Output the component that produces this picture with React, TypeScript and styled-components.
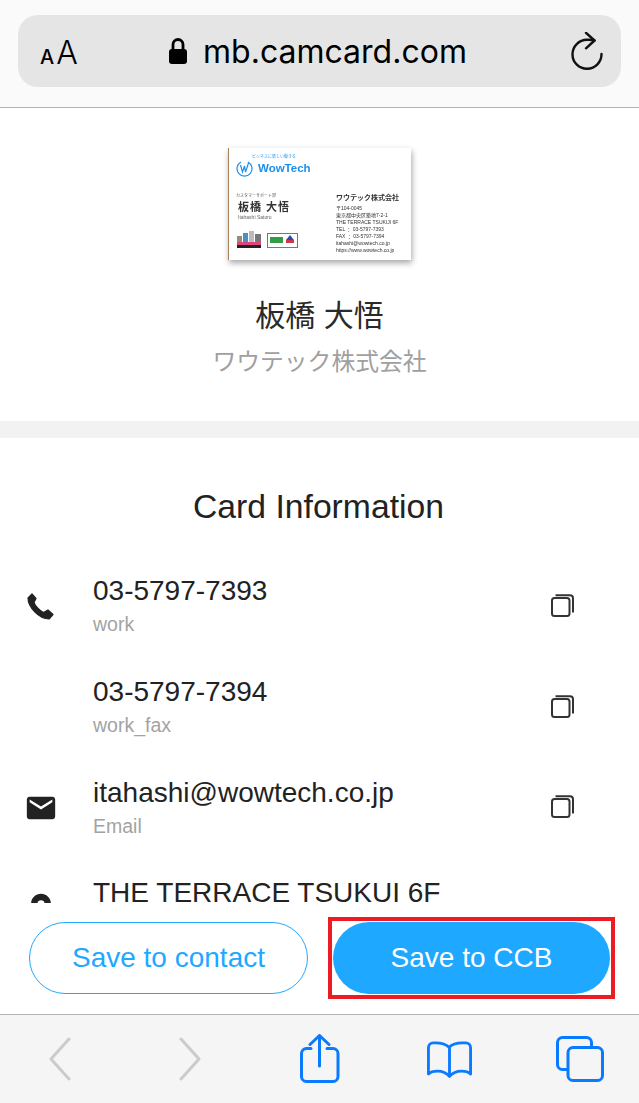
import React from "react";
import styled, { createGlobalStyle } from "styled-components";
import { MdEmail, MdPlace } from "react-icons/md";

const GlobalStyle = createGlobalStyle`
  html, body {
    margin: 0;
    padding: 0;
    background: #fff;
  }
  body {
    font-family: "Liberation Sans", "Noto Sans CJK JP", Arial, sans-serif;
  }
`;

const Page = styled.div`
  width: 639px;
  height: 1103px;
  display: flex;
  flex-direction: column;
  overflow: hidden;
  color: #222;
`;

const AddressBar = styled.header`
  height: 72px;
  flex: none;
  background: #fafafa;
  border-bottom: 1px solid #b2b2b2;
  padding: 15px 18px 20px;
`;

const AddressPill = styled.div`
  height: 72px;
  border-radius: 20px;
  background: #e5e5e5;
  display: flex;
  align-items: center;
  padding: 0 18px 0 22px;
  color: #000;
`;

const TextSize = styled.div`
  width: 40px;
  font-family: Inter, "Liberation Sans", sans-serif;
  font-size: 32px;
  font-weight: 300;
  line-height: 1;
  padding-top: 3px;
  white-space: nowrap;

  small {
    font-size: 20px;
    font-weight: 500;
    margin-right: 2px;
  }
`;

const Url = styled.div`
  flex: 1;
  display: flex;
  justify-content: center;
  align-items: center;
  gap: 16px;
  font-family: Inter, "Liberation Sans", sans-serif;
  font-size: 32px;
  padding-right: 15px;
`;

const Scroll = styled.main`
  flex: 1;
  min-height: 0;
  overflow: hidden;
  background: #fff;
`;

const Hero = styled.section`
  height: 330px;
  display: flex;
  flex-direction: column;
  align-items: center;
  padding-top: 40px;
  box-sizing: border-box;
  border-bottom: 17px solid #f2f2f2;
`;

const Name = styled.h1`
  margin: 36px 0 0;
  font-size: 30px;
  line-height: 40px;
  font-weight: 400;
  color: #2a2a2a;
`;

const Company = styled.p`
  margin: 10px 0 0;
  font-size: 23.8px;
  line-height: 32px;
  color: #a0a0a0;
`;

const BizCard = styled.div`
  width: 183px;
  height: 112px;
  box-sizing: border-box;
  background: #fff;
  border-left: 1px solid #a8805c;
  box-shadow: 1px 3px 6px rgba(0, 0, 0, 0.35);
  padding: 4px 8px 4px 7px;
  display: grid;
  grid-template-columns: 100px 1fr;
  color: #333;
  line-height: 1;
  overflow: hidden;
  filter: blur(0.35px);
`;

const BizLeft = styled.div`
  display: flex;
  flex-direction: column;
  padding-top: 3px;
`;

const BizRight = styled.div`
  padding-top: 42px;
  font-size: 5px;
  line-height: 7px;
  white-space: nowrap;
`;

const Tagline = styled.div`
  font-size: 4px;
  color: #2a9df4;
  margin-left: 16px;
  height: 5px;
`;

const BizLogo = styled.div`
  display: flex;
  align-items: center;
  gap: 5px;
  font-size: 11.5px;
  font-weight: 700;
  color: #1e8fe8;
`;

const Dept = styled.div`
  font-size: 4px;
  margin-top: 17px;
  color: #555;
`;

const BizName = styled.div`
  font-size: 11px;
  font-weight: 700;
  letter-spacing: 1px;
  margin: 4px 0 0 2px;
`;

const Romaji = styled.div`
  font-size: 5px;
  color: #666;
  margin: 2px 0 0 2px;
`;

const Badges = styled.div`
  display: flex;
  gap: 5px;
  margin-top: 10px;
  align-items: flex-end;
`;

const BizCompany = styled.div`
  font-size: 7px;
  font-weight: 700;
  line-height: 8px;
  margin-bottom: 3px;
`;

const InfoTitle = styled.h2`
  margin: 0;
  padding-top: 48px;
  font-size: 33.7px;
  line-height: 40px;
  font-weight: 400;
  text-align: center;
  color: #222;
  padding-right: 2px;
`;

const InfoList = styled.div`
  margin-top: 29px;
`;

const Row = styled.div`
  height: 100.7px;
  display: grid;
  grid-template-columns: 93px 1fr 88px;
  align-items: center;
`;

const RowIcon = styled.div`
  display: flex;
  justify-content: center;
  padding-right: 12px;
  color: #222;
  padding-top: 2px;
`;

const RowValue = styled.div`
  font-size: 28px;
  line-height: 36px;
  color: #222;
  white-space: nowrap;
`;

const RowLabel = styled.div`
  font-size: 19.5px;
  line-height: 26px;
  margin-top: 2px;
  color: #a3a3a3;
`;

const CopyButton = styled.div`
  display: flex;
`;

const ActionBar = styled.div`
  flex: none;
  height: 111px;
  box-sizing: border-box;
  background: #fff;
  padding: 14px 24px 15px 29px;
  display: flex;
  align-items: center;
  gap: 20px;
`;

const ActionButton = styled.button<{ $primary?: boolean }>`
  height: 72px;
  border-radius: 36px;
  box-sizing: border-box;
  font-family: inherit;
  font-size: 28px;
  padding: 0;
  margin: 0;
  color: ${(p) => (p.$primary ? "#fff" : "#1fa8ff")};
  background: ${(p) => (p.$primary ? "#1fa8ff" : "#fff")};
  border: ${(p) => (p.$primary ? "none" : "1px solid #1fa8ff")};
  width: ${(p) => (p.$primary ? "277px" : "279px")};
`;

const Highlight = styled.div`
  padding: 1px;
  border: 4px solid #ed1c24;
  display: flex;
`;

const ToolBar = styled.footer`
  flex: none;
  height: 89px;
  box-sizing: border-box;
  border-top: 1px solid #b2b2b2;
  background: #f5f5f5;
  display: grid;
  grid-template-columns: repeat(5, 130px);
  justify-content: center;
  align-items: center;
`;

const ToolSlot = styled.div`
  display: flex;
  justify-content: center;
`;

const Lock = () => (
  <svg width="18" height="26" viewBox="0 0 18 26">
    <path d="M4 13V6.500a5 5 0 0 1 10 0V13" fill="none" stroke="#000" strokeWidth="2.800" />
    <rect x="0" y="11" width="18" height="15" rx="3" fill="#000" />
  </svg>
);

const Reload = () => (
  <svg width="32" height="38" viewBox="0 0 32 38" fill="none" stroke="#111" strokeWidth="2.400" strokeLinecap="round" strokeLinejoin="round">
    <path d="M30.500 22A14.500 14.500 0 1 1 16 7.800c2.500 0 5-.2 7.500.7" />
    <path d="M15 .8 23.500 8.500 15 16.300" />
  </svg>
);

const PhoneIcon = () => (
  <svg width="27" height="27" viewBox="0 0 27 27" fill="#222" stroke="#222" strokeWidth="1.200" strokeLinejoin="round">
    <path d="M5 1 9 5.500 7 9.500C8 13 13 18 16.500 19.500L21 17 26 21.500 22 26C12 26 1 14 1 5Z" />
  </svg>
);

const CopyIcon = () => (
  <svg width="23" height="23" viewBox="0 0 23 23" fill="none" stroke="#333" strokeWidth="2">
    <rect x="1" y="4" width="17.500" height="18" rx="2.500" />
    <path d="M4.500 1.200h14.500a3 3 0 0 1 3 3V18.500" />
  </svg>
);

const BackIcon = () => (
  <svg width="22" height="44" viewBox="0 0 22 44" fill="none" stroke="#cbcbcb" strokeWidth="3" strokeLinecap="round" strokeLinejoin="round">
    <path d="M20 2 2 22l18 20" />
  </svg>
);

const ForwardIcon = () => (
  <svg width="22" height="44" viewBox="0 0 22 44" fill="none" stroke="#cbcbcb" strokeWidth="3" strokeLinecap="round" strokeLinejoin="round">
    <path d="M2 2l18 20L2 42" />
  </svg>
);

const ShareIcon = () => (
  <svg width="40" height="50" viewBox="0 0 40 50" fill="none" stroke="#0a7aff" strokeWidth="3" strokeLinecap="round" strokeLinejoin="round">
    <path d="M11 14.500H6.500a5 5 0 0 0-5 5v23a5 5 0 0 0 5 5h26.500a5 5 0 0 0 5-5v-23a5 5 0 0 0-5-5H27" />
    <path d="M19.500 32V1.500M10 10.500l9.500-9 9.500 9" />
  </svg>
);

const BookIcon = () => (
  <svg width="45" height="38.300" viewBox="0 -1.500 47 40" fill="none" stroke="#0a7aff" strokeWidth="3" strokeLinecap="round" strokeLinejoin="round">
    <path d="M23 6C20 3 15 1.500 9 1.500H6.500a5 5 0 0 0-5 5V34c2-2 5-3 9.500-3 5 0 9.500 2 12.500 5.500 3-3.500 7.500-5.500 12.500-5.500 4.500 0 7.500 1 9.500 3V6.500a5 5 0 0 0-5-5H37C31 1.500 26 3 23 6z" />
    <path d="M23.500 6v30" />
  </svg>
);

const TabsIcon = () => (
  <svg width="48" height="46" viewBox="0 0 48 46" fill="none" stroke="#0a7aff" strokeWidth="3" strokeLinejoin="round">
    <path d="M11.500 33.500H6.500a5 5 0 0 1-5-5V6.500a5 5 0 0 1 5-5h24a5 5 0 0 1 5 5v5" />
    <rect x="12" y="11.500" width="34.500" height="33" rx="5" />
  </svg>
);

const WowMark = () => (
  <svg width="17" height="17" viewBox="0 0 17 17" fill="none" stroke="#1e8fe8" strokeWidth="1.200">
    <path d="M5 2a7.500 7.500 0 1 0 7 0" />
    <path d="M4.500 5l2 7 2-6 1 6 3-9" />
  </svg>
);

const BadgeCity = () => (
  <svg width="26" height="18" viewBox="0 0 26 18">
    <rect x="1" y="6" width="5" height="6" fill="#9a8c7a" />
    <rect x="7" y="3" width="5" height="9" fill="#4a90c2" />
    <rect x="13" y="1" width="5" height="11" fill="#bbb" />
    <rect x="19" y="4" width="6" height="8" fill="#777" />
    <rect x="1" y="12" width="24" height="3" fill="#e0447c" />
    <rect x="1" y="15" width="24" height="3" fill="#222" />
  </svg>
);

const BadgeGroup = () => (
  <svg width="31" height="15" viewBox="0 0 31 15">
    <rect x="0.500" y="0.500" width="30" height="14" fill="#fff" stroke="#777" />
    <rect x="3" y="4" width="13" height="6" fill="#2f9e44" />
    <path d="M23 2l4 5h-8z" fill="#2b4ba8" />
    <rect x="19" y="7" width="8" height="3" fill="#d0354d" />
  </svg>
);

const rows = [
  { icon: <PhoneIcon />, value: "03-5797-7393", label: "work", copy: true },
  { icon: null, value: "03-5797-7394", label: "work_fax", copy: true },
  { icon: <MdEmail size={34} />, value: "itahashi@wowtech.co.jp", label: "Email", copy: true },
  { icon: <MdPlace size={34} />, value: "THE TERRACE TSUKUI 6F", label: "Address", copy: false },
];

const App = () => {
  return (
    <Page>
      <GlobalStyle />
      <AddressBar>
        <AddressPill>
          <TextSize>
            <small>A</small>A
          </TextSize>
          <Url>
            <Lock />
            mb.camcard.com
          </Url>
          <Reload />
        </AddressPill>
      </AddressBar>

      <Scroll>
        <Hero>
          <BizCard>
            <BizLeft>
              <Tagline>ビジネスに新しい働きを</Tagline>
              <BizLogo>
                <WowMark />
                WowTech
              </BizLogo>
              <Dept>カスタマーサポート部</Dept>
              <BizName>板橋 大悟</BizName>
              <Romaji>Itahashi Satoru</Romaji>
              <Badges>
                <BadgeCity />
                <BadgeGroup />
              </Badges>
            </BizLeft>
            <BizRight>
              <BizCompany>ワウテック株式会社</BizCompany>
              〒104-0045
              <br />
              東京都中央区築地7-2-1
              <br />
              THE TERRACE TSUKIJI 6F
              <br />
              TEL ： 03-5797-7393
              <br />
              FAX ： 03-5797-7394
              <br />
              itahashi@wowtech.co.jp
              <br />
              https://www.wowtech.co.jp
            </BizRight>
          </BizCard>
          <Name>板橋 大悟</Name>
          <Company>ワウテック株式会社</Company>
        </Hero>

        <InfoTitle>Card Information</InfoTitle>
        <InfoList>
          {rows.map((row) => (
            <Row key={row.value}>
              <RowIcon>{row.icon}</RowIcon>
              <div>
                <RowValue>{row.value}</RowValue>
                <RowLabel>{row.label}</RowLabel>
              </div>
              <CopyButton>{row.copy && <CopyIcon />}</CopyButton>
            </Row>
          ))}
        </InfoList>
      </Scroll>

      <ActionBar>
        <ActionButton>Save to contact</ActionButton>
        <Highlight>
          <ActionButton $primary>Save to CCB</ActionButton>
        </Highlight>
      </ActionBar>

      <ToolBar>
        <ToolSlot><BackIcon /></ToolSlot>
        <ToolSlot><ForwardIcon /></ToolSlot>
        <ToolSlot><ShareIcon /></ToolSlot>
        <ToolSlot><BookIcon /></ToolSlot>
        <ToolSlot><TabsIcon /></ToolSlot>
      </ToolBar>
    </Page>
  );
};

export default App;
